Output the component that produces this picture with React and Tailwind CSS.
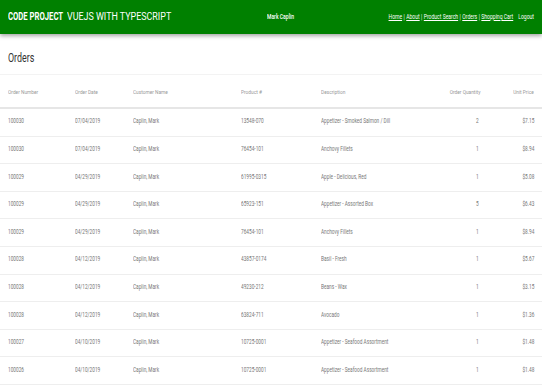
const rows = [
  ["100030", "07/04/2019", "Caplin, Mark", "13548-070", "Appetizer - Smoked Salmon / Dill", "2", "$7.15"],
  ["100030", "07/04/2019", "Caplin, Mark", "76454-101", "Anchovy Fillets", "1", "$8.94"],
  ["100029", "04/29/2019", "Caplin, Mark", "61995-0315", "Apple - Delicious, Red", "1", "$5.08"],
  ["100029", "04/29/2019", "Caplin, Mark", "65923-151", "Appetizer - Assorted Box", "5", "$6.43"],
  ["100029", "04/29/2019", "Caplin, Mark", "76454-101", "Anchovy Fillets", "1", "$8.94"],
  ["100028", "04/12/2019", "Caplin, Mark", "43857-0174", "Basil - Fresh", "1", "$5.67"],
  ["100028", "04/12/2019", "Caplin, Mark", "49230-212", "Beans - Wax", "1", "$3.15"],
  ["100028", "04/12/2019", "Caplin, Mark", "63824-711", "Avocado", "1", "$1.36"],
  ["100027", "04/10/2019", "Caplin, Mark", "10725-0001", "Appetizer - Seafood Assortment", "1", "$1.48"],
  ["100026", "04/10/2019", "Caplin, Mark", "10725-0001", "Appetizer - Seafood Assortment", "1", "$1.48"],
];

const cols = "grid grid-cols-[67px_58px_108px_80px_1fr_60px_54px] items-center px-2";

// condensed look: the source uses a narrow face
function L({ children, h }) {
  return <span className={`inline-block whitespace-nowrap origin-left ${h ? "scale-x-[0.8]" : "scale-x-[0.73]"}`}>{children}</span>;
}
function R({ children, h }) {
  return <span className={`inline-block whitespace-nowrap origin-right ${h ? "scale-x-[0.8]" : "scale-x-[0.73]"}`}>{children}</span>;
}

export default function App() {
  return (
    <div className="w-[542px] h-[387px] overflow-hidden bg-white" style={{ fontFamily: '"Roboto", "Liberation Sans", sans-serif' }}>
      {/* Header */}
      <header className="h-[34px] bg-[#008000] shadow-[0_2px_4px_rgba(0,0,0,0.35)] flex items-center px-2 text-white relative">
        <div className="text-[11px] whitespace-nowrap flex items-center">
          <span className="inline-block font-bold origin-left scale-x-[0.7] w-[59px]">CODE PROJECT</span>
          <span className="inline-block origin-left scale-x-[0.81]">VUEJS WITH TYPESCRIPT</span>
        </div>
        <div className="absolute left-[267px] text-[7px] font-medium">
          <span className="inline-block origin-left scale-x-[0.72]">Mark Caplin</span>
        </div>
        <nav className="ml-auto flex items-center text-[7px] whitespace-nowrap origin-right scale-x-[0.72]">
          <a className="underline">Home</a><span className="mx-[2px]">|</span>
          <a className="underline">About</a><span className="mx-[2px]">|</span>
          <a className="underline">Product Search</a><span className="mx-[2px]">|</span>
          <a className="underline">Orders</a><span className="mx-[2px]">|</span>
          <a className="underline">Shopping Cart</a>
          <a className="ml-[7px]">Logout</a>
        </nav>
      </header>

      {/* Title */}
      <div className="h-[41px] flex items-center px-2 border-b border-[#f3f3f3]">
        <h1 className="text-[12px] text-[#333] mt-[8px]">
          <span className="inline-block origin-left scale-x-[0.74]">Orders</span>
        </h1>
      </div>

      {/* Table header */}
      <div className={`${cols} h-[34px] border-b-2 border-[#e6e6e6] text-[6px] text-[#999]`}>
        <div><L h>Order Number</L></div>
        <div><L h>Order Date</L></div>
        <div><L h>Customer Name</L></div>
        <div><L h>Product #</L></div>
        <div><L h>Description</L></div>
        <div className="text-right"><R h>Order Quantity</R></div>
        <div className="text-right"><R h>Unit Price</R></div>
      </div>

      {rows.map((r, i) => (
        <div key={i} className={`${cols} h-[27.6px] border-b border-[#eeeeee] text-[6.5px] text-[#777]`}>
          <div><L>{r[0]}</L></div>
          <div><L>{r[1]}</L></div>
          <div><L>{r[2]}</L></div>
          <div><L>{r[3]}</L></div>
          <div><L>{r[4]}</L></div>
          <div className="text-right pr-[1px]"><R>{r[5]}</R></div>
          <div className="text-right"><R>{r[6]}</R></div>
        </div>
      ))}
    </div>
  );
}
